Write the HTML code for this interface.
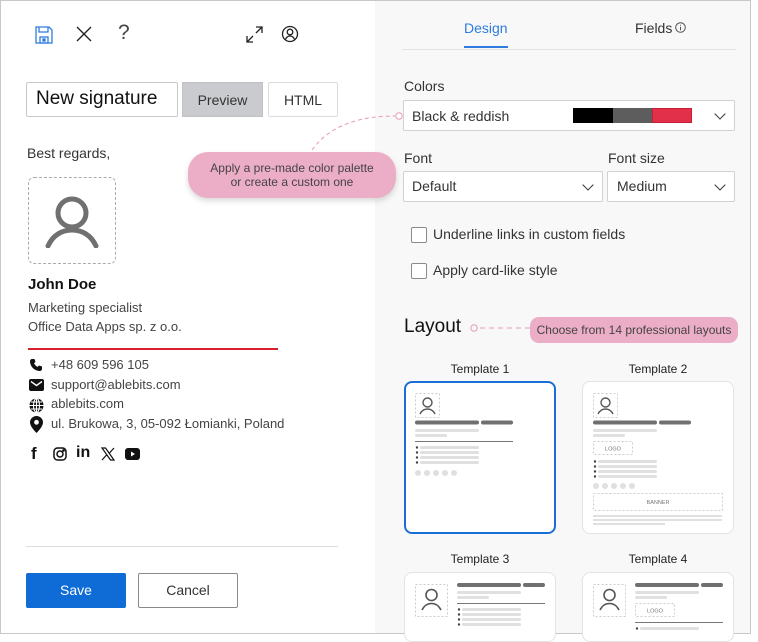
<!DOCTYPE html>
<html><head><meta charset="utf-8"><style>
*{box-sizing:border-box;margin:0;padding:0}
body{width:758px;height:634px;position:relative;overflow:hidden;background:#fff;font-family:"Segoe UI","Liberation Sans",sans-serif;color:#242424}
.a{position:absolute}
.frame{left:0;top:0;width:751px;height:634px;border:1px solid #c8c8c8;border-right:1px solid #c8c8c8}
.right{left:375px;top:1px;width:375px;height:632px;background:#f8f8f8}
.box{position:absolute;border:1px solid #d1d1d1;background:#fff;border-radius:2px}
.t{position:absolute;white-space:nowrap}
.chev{position:absolute;width:8px;height:8px;border-right:1.5px solid #333;border-bottom:1.5px solid #333;transform:rotate(45deg)}
.cb{position:absolute;width:16px;height:16px;border:1px solid #8a8a8a;border-radius:2px;background:#fff}
.card{position:absolute;width:152px;height:153px;background:#fff;border:1px solid #e3e3e3;border-radius:8px}
.pill{position:absolute;background:#ecadc6;color:#444}
</style></head><body>
<div class="a right"></div>
<div class="a frame"></div>

<!-- toolbar -->
<svg class="a" style="left:34px;top:25px" width="20" height="20" viewBox="0 0 20 20" fill="none" stroke="#2f7be0" stroke-width="1.3"><path d="M2 2h13l3 3v13H2z"/><path d="M5 2v5h9V2"/><rect x="6" y="12" width="8" height="6"/><rect x="9" y="14" width="2" height="2" fill="#2f7be0"/></svg>
<svg class="a" style="left:75px;top:25px" width="18" height="18" viewBox="0 0 18 18" stroke="#222" stroke-width="1.4"><path d="M2 2l14 14M16 2L2 16"/></svg>
<div class="t" style="left:118px;top:21px;font-size:21px;color:#444;font-weight:300">?</div>
<svg class="a" style="left:245px;top:25px" width="19" height="19" viewBox="0 0 19 19" fill="none" stroke="#222" stroke-width="1.3"><path d="M11 2h6v6M17 2l-6 6M8 17H2v-6M2 17l6-6"/></svg>
<svg class="a" style="left:281px;top:25px" width="18" height="18" viewBox="0 0 18 18" fill="none" stroke="#222" stroke-width="1.3"><circle cx="9" cy="9" r="7.5"/><circle cx="9" cy="7" r="2.8"/><path d="M4.5 14.3c1-2.2 2.6-3.3 4.5-3.3s3.5 1.1 4.5 3.3"/></svg>

<!-- name row -->
<div class="box" style="left:26px;top:82px;width:152px;height:35px;border-color:#c8c8c8"></div>
<div class="t" style="left:36px;top:88px;font-size:19px;color:#111">New signature</div>
<div class="a" style="left:182px;top:82px;width:81px;height:35px;background:#c9cbce;border:1px solid #bfc1c4"></div>
<div class="t" style="left:182px;top:92px;width:81px;text-align:center;font-size:14px;color:#333">Preview</div>
<div class="box" style="left:268px;top:82px;width:70px;height:35px;border-color:#dcdcdc"></div>
<div class="t" style="left:268px;top:92px;width:70px;text-align:center;font-size:14px;color:#333">HTML</div>

<div class="t" style="left:27px;top:145px;font-size:14px;color:#333">Best regards,</div>
<div class="a" style="left:28px;top:177px;width:88px;height:87px;border:1.5px dashed #aaa;border-radius:6px"></div>
<svg class="a" style="left:44px;top:192px" width="56" height="56" viewBox="0 0 56 56" fill="none" stroke="#707070" stroke-width="5" stroke-linecap="round"><circle cx="28" cy="21" r="14"/><path d="M4 54c5-11 14-16 24-16s19 5 24 16"/></svg>
<div class="t" style="left:28px;top:276px;font-size:15px;font-weight:bold;color:#111">John Doe</div>
<div class="t" style="left:28px;top:300px;font-size:13px;color:#444">Marketing specialist</div>
<div class="t" style="left:28px;top:319px;font-size:13px;color:#444">Office Data Apps sp. z o.o.</div>
<div class="a" style="left:28px;top:348px;width:250px;height:2px;background:#d6202e"></div>

<svg class="a" style="left:29px;top:358px" width="14" height="14" viewBox="0 0 14 14"><path d="M3 1l2.5 0 1 3-1.5 1.2c.8 1.7 2 2.9 3.7 3.7L10 7.5l3 1V11c0 1-1 2-2 2C5.5 13 1 8.5 1 3c0-1 1-2 2-2z" fill="#111"/></svg>
<svg class="a" style="left:29px;top:379px" width="15" height="12" viewBox="0 0 15 12"><rect x="0" y="0" width="15" height="12" rx="2" fill="#111"/><path d="M2 2.5l5.5 4 5.5-4" stroke="#fff" stroke-width="1.4" fill="none"/></svg>
<svg class="a" style="left:29px;top:398px" width="15" height="15" viewBox="0 0 15 15"><circle cx="7.5" cy="7.5" r="7" fill="#111"/><path d="M0.5 7.5h14M7.5 .5v14M2 4h11M2 11h11" stroke="#fff" stroke-width="1.1"/><ellipse cx="7.5" cy="7.5" rx="3" ry="7" fill="none" stroke="#fff" stroke-width="1.1"/></svg>
<svg class="a" style="left:30px;top:416px" width="13" height="17" viewBox="0 0 13 17"><path d="M6.5 0C3 0 0 2.8 0 6.3 0 11 6.5 17 6.5 17S13 11 13 6.3C13 2.8 10 0 6.5 0z" fill="#111"/><circle cx="6.5" cy="6.3" r="2.4" fill="#fff"/></svg>
<div class="t" style="left:51px;top:357px;font-size:13px;color:#444">+48 609 596 105</div>
<div class="t" style="left:51px;top:377px;font-size:13px;color:#444">support@ablebits.com</div>
<div class="t" style="left:51px;top:396px;font-size:13px;color:#444">ablebits.com</div>
<div class="t" style="left:51px;top:416px;font-size:13px;color:#444">ul. Brukowa, 3, 05-092 Łomianki, Poland</div>

<div class="t" style="left:31px;top:444px;font-size:17px;font-weight:bold;color:#111">f</div>
<svg class="a" style="left:53px;top:447px" width="14" height="14" viewBox="0 0 14 14" fill="none" stroke="#111" stroke-width="1.5"><rect x="1" y="1" width="12" height="12" rx="3.5"/><circle cx="7" cy="7" r="3"/><circle cx="10.5" cy="3.5" r=".6" fill="#111"/></svg>
<div class="t" style="left:76px;top:444px;font-size:16px;font-weight:bold;color:#111">in</div>
<svg class="a" style="left:101px;top:447px" width="14" height="14" viewBox="0 0 14 14" fill="none" stroke="#111" stroke-width="1.2"><path d="M1 1h3.5l8.5 12H9.5zM13 1L8 6.5M1 13l5-5.5"/></svg>
<svg class="a" style="left:125px;top:448px" width="15" height="12" viewBox="0 0 15 12"><rect width="15" height="12" rx="3" fill="#111"/><path d="M6 3.5v5l4-2.5z" fill="#fff"/></svg>

<div class="a" style="left:26px;top:546px;width:312px;height:1px;background:#dcdcdc"></div>
<div class="a" style="left:26px;top:573px;width:100px;height:35px;background:#0f6cd6;border-radius:2px"></div>
<div class="t" style="left:26px;top:582px;width:100px;text-align:center;font-size:14px;color:#fff">Save</div>
<div class="a" style="left:138px;top:573px;width:100px;height:35px;border:1px solid #8a8a8a;border-radius:2px;background:#fff"></div>
<div class="t" style="left:138px;top:582px;width:100px;text-align:center;font-size:14px;color:#333">Cancel</div>

<!-- right panel -->
<div class="t" style="left:464px;top:20px;font-size:14px;color:#2f7be0">Design</div>
<div class="a" style="left:464px;top:46px;width:44px;height:2px;background:#2f7be0"></div>
<div class="t" style="left:635px;top:20px;font-size:14px;color:#333">Fields</div>
<svg class="a" style="left:675px;top:22px" width="11" height="11" viewBox="0 0 11 11" fill="none" stroke="#555"><circle cx="5.5" cy="5.5" r="4.8"/><path d="M5.5 4.8v3.5M5.5 2.8v.8"/></svg>
<div class="a" style="left:402px;top:49px;width:334px;height:1px;background:#e2e2e2"></div>

<div class="t" style="left:404px;top:78px;font-size:14px;color:#333">Colors</div>
<div class="box" style="left:403px;top:100px;width:332px;height:31px"></div>
<div class="t" style="left:412px;top:108px;font-size:14px;color:#333">Black &amp; reddish</div>
<div class="a" style="left:573px;top:108px;width:40px;height:15px;background:#000"></div>
<div class="a" style="left:613px;top:108px;width:39px;height:15px;background:#5d5d5d"></div>
<div class="a" style="left:652px;top:108px;width:40px;height:15px;background:#e2304a;border:1px solid #c71f35"></div>
<div class="chev" style="left:716px;top:110px"></div>

<div class="t" style="left:404px;top:150px;font-size:14px;color:#333">Font</div>
<div class="t" style="left:608px;top:150px;font-size:14px;color:#333">Font size</div>
<div class="box" style="left:403px;top:171px;width:200px;height:31px"></div>
<div class="t" style="left:412px;top:178px;font-size:14px;color:#333">Default</div>
<div class="chev" style="left:584px;top:181px"></div>
<div class="box" style="left:607px;top:171px;width:128px;height:31px"></div>
<div class="t" style="left:617px;top:178px;font-size:14px;color:#333">Medium</div>
<div class="chev" style="left:716px;top:181px"></div>

<div class="cb" style="left:411px;top:227px"></div>
<div class="t" style="left:433px;top:226px;font-size:14px;color:#333">Underline links in custom fields</div>
<div class="cb" style="left:411px;top:263px"></div>
<div class="t" style="left:433px;top:262px;font-size:14px;color:#333">Apply card-like style</div>

<div class="t" style="left:404px;top:316px;font-size:19px;color:#111">Layout</div>

<!-- callouts -->
<svg class="a" style="left:300px;top:105px" width="110" height="50" fill="none" stroke="#e99ab8" stroke-width="1"><path d="M12 45C30 20 60 11 95 11" stroke-dasharray="4 3"/><circle cx="99" cy="11" r="3.2" fill="#fff"/></svg>
<div class="pill" style="left:188px;top:152px;width:208px;height:46px;border-radius:20px;box-shadow:0 3px 6px rgba(0,0,0,.15);font-size:12px;text-align:center;line-height:14px;padding-top:9px">Apply a pre-made color palette<br>or create a custom one</div>
<svg class="a" style="left:468px;top:322px" width="64" height="12" fill="none" stroke="#e99ab8"><circle cx="6" cy="6" r="3.2"/><path d="M12 6h52" stroke-dasharray="5 4"/></svg>
<div class="pill" style="left:530px;top:317px;width:208px;height:26px;border-radius:9px;font-size:12px;line-height:26px;text-align:center">Choose from 14 professional layouts</div>

<!-- templates -->
<div class="t" style="left:404px;top:362px;width:152px;text-align:center;font-size:12px;color:#222">Template 1</div>
<div class="t" style="left:582px;top:362px;width:152px;text-align:center;font-size:12px;color:#222">Template 2</div>
<div class="t" style="left:404px;top:552px;width:152px;text-align:center;font-size:12px;color:#222">Template 3</div>
<div class="t" style="left:582px;top:552px;width:152px;text-align:center;font-size:12px;color:#222">Template 4</div>

<div class="card" style="left:404px;top:381px;border:2px solid #1a6fd6"></div>
<svg class="a" style="left:404px;top:381px" width="152" height="153">
<rect x="11.5" y="12.5" width="24" height="24" fill="none" stroke="#ccc" stroke-dasharray="2 2"/>
<g fill="none" stroke="#555" stroke-width="1.4"><circle cx="23.5" cy="21.5" r="4.5"/><path d="M16 33c2-4 5-5 7.5-5s5.5 1 7.5 5"/></g>
<rect x="11" y="39.5" width="64" height="4" rx="2" fill="#707070"/><rect x="77" y="39.5" width="32" height="4" rx="2" fill="#707070"/>
<rect x="11" y="48" width="64" height="3" rx="1.5" fill="#e0e0e0"/><rect x="11" y="53" width="32" height="3" rx="1.5" fill="#e0e0e0"/>
<rect x="11" y="60" width="98" height="1" fill="#777"/>
<g fill="#e0e0e0"><rect x="16" y="65" width="59" height="3" rx="1.5"/><rect x="16" y="70" width="59" height="3" rx="1.5"/><rect x="16" y="75" width="59" height="3" rx="1.5"/><rect x="16" y="80" width="59" height="3" rx="1.5"/></g>
<g fill="#444"><circle cx="13" cy="66.5" r="1.2"/><circle cx="13" cy="71.5" r="1.2"/><circle cx="13" cy="76.5" r="1.2"/><circle cx="13" cy="81.5" r="1.2"/></g>
<g fill="#e0e0e0"><circle cx="14" cy="92" r="3"/><circle cx="23" cy="92" r="3"/><circle cx="32" cy="92" r="3"/><circle cx="41" cy="92" r="3"/><circle cx="50" cy="92" r="3"/></g>
</svg>

<div class="card" style="left:582px;top:381px"></div>
<svg class="a" style="left:582px;top:381px" width="152" height="153">
<rect x="11.5" y="12.5" width="24" height="24" fill="none" stroke="#ccc" stroke-dasharray="2 2"/>
<g fill="none" stroke="#555" stroke-width="1.4"><circle cx="23.5" cy="21.5" r="4.5"/><path d="M16 33c2-4 5-5 7.5-5s5.5 1 7.5 5"/></g>
<rect x="11" y="39.5" width="64" height="4" rx="2" fill="#707070"/><rect x="77" y="39.5" width="32" height="4" rx="2" fill="#707070"/>
<rect x="11" y="48" width="64" height="3" rx="1.5" fill="#e0e0e0"/><rect x="11" y="53" width="32" height="3" rx="1.5" fill="#e0e0e0"/>
<rect x="11.5" y="60.5" width="39" height="13" fill="none" stroke="#ccc" stroke-dasharray="2 2"/><text x="31" y="69.5" font-size="5.5" text-anchor="middle" fill="#777" font-family="Liberation Sans">LOGO</text>
<g fill="#e0e0e0"><rect x="16" y="79" width="59" height="3" rx="1.5"/><rect x="16" y="84" width="59" height="3" rx="1.5"/><rect x="16" y="89" width="59" height="3" rx="1.5"/><rect x="16" y="94" width="59" height="3" rx="1.5"/></g>
<g fill="#444"><circle cx="13" cy="80.5" r="1.2"/><circle cx="13" cy="85.5" r="1.2"/><circle cx="13" cy="90.5" r="1.2"/><circle cx="13" cy="95.5" r="1.2"/></g>
<g fill="#e0e0e0"><circle cx="14" cy="105" r="3"/><circle cx="23" cy="105" r="3"/><circle cx="32" cy="105" r="3"/><circle cx="41" cy="105" r="3"/><circle cx="50" cy="105" r="3"/></g>
<rect x="11.5" y="112.5" width="129" height="17" fill="none" stroke="#ccc" stroke-dasharray="2 2"/><text x="76" y="123" font-size="5.5" text-anchor="middle" fill="#777" font-family="Liberation Sans">BANNER</text>
<rect x="11" y="134" width="129" height="2" fill="#e0e0e0"/><rect x="11" y="138" width="129" height="2" fill="#e0e0e0"/><rect x="11" y="142" width="72" height="2" fill="#e0e0e0"/>
</svg>

<div class="card" style="left:404px;top:572px;height:70px"></div>
<svg class="a" style="left:404px;top:572px" width="152" height="62">
<rect x="11.5" y="12.5" width="32" height="32" fill="none" stroke="#ccc" stroke-dasharray="2 2"/>
<g fill="none" stroke="#555" stroke-width="1.6"><circle cx="27.5" cy="23" r="5.5"/><path d="M18 38c2.5-5 6-6.5 9.5-6.5s7 1.5 9.5 6.5"/></g>
<rect x="53" y="11" width="64" height="4" rx="2" fill="#707070"/><rect x="119" y="11" width="22" height="4" rx="2" fill="#707070"/>
<rect x="53" y="19" width="64" height="3" rx="1.5" fill="#e0e0e0"/><rect x="53" y="24" width="32" height="3" rx="1.5" fill="#e0e0e0"/>
<rect x="53" y="31" width="88" height="1" fill="#777"/>
<g fill="#e0e0e0"><rect x="58" y="36" width="59" height="3" rx="1.5"/><rect x="58" y="41" width="59" height="3" rx="1.5"/><rect x="58" y="46" width="59" height="3" rx="1.5"/><rect x="58" y="51" width="59" height="3" rx="1.5"/></g>
<g fill="#444"><circle cx="55" cy="37.5" r="1.2"/><circle cx="55" cy="42.5" r="1.2"/><circle cx="55" cy="47.5" r="1.2"/><circle cx="55" cy="52.5" r="1.2"/></g>
</svg>

<div class="card" style="left:582px;top:572px;height:70px"></div>
<svg class="a" style="left:582px;top:572px" width="152" height="62">
<rect x="11.5" y="12.5" width="32" height="32" fill="none" stroke="#ccc" stroke-dasharray="2 2"/>
<g fill="none" stroke="#555" stroke-width="1.6"><circle cx="27.5" cy="23" r="5.5"/><path d="M18 38c2.5-5 6-6.5 9.5-6.5s7 1.5 9.5 6.5"/></g>
<rect x="53" y="11" width="64" height="4" rx="2" fill="#707070"/><rect x="119" y="11" width="22" height="4" rx="2" fill="#707070"/>
<rect x="53" y="19" width="64" height="3" rx="1.5" fill="#e0e0e0"/><rect x="53" y="24" width="32" height="3" rx="1.5" fill="#e0e0e0"/>
<rect x="53.5" y="31.5" width="39" height="13" fill="none" stroke="#ccc" stroke-dasharray="2 2"/><text x="73" y="40.5" font-size="5.5" text-anchor="middle" fill="#777" font-family="Liberation Sans">LOGO</text>
<rect x="53" y="50" width="88" height="1" fill="#777"/>
<rect x="58" y="55" width="59" height="3" rx="1.5" fill="#e0e0e0"/><circle cx="55" cy="56.5" r="1.2" fill="#444"/>
</svg>
</body></html>
